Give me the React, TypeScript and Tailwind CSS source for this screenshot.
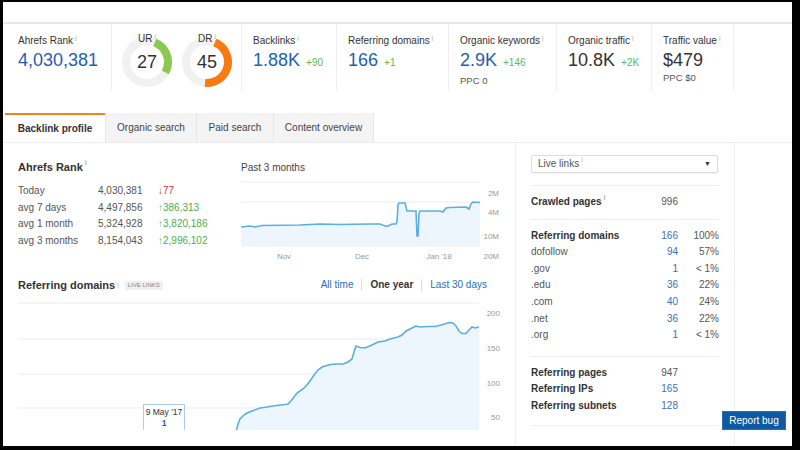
import type { ReactNode } from "react";

const BLUE = "text-[#1f5fb5]";

function Info() {
  return <span className="ml-[2px] align-top text-[7px] leading-none text-[#b0b0b0]">i</span>;
}

function Metric({
  label,
  value,
  delta,
  sub,
  dark,
  width,
}: {
  label: string;
  value: string;
  delta?: string;
  sub?: string;
  dark?: boolean;
  width: string;
}) {
  return (
    <div className={`${width} border-r border-[#efefef] pl-[11px] pt-[11px]`}>
      <div className="text-[10px] leading-[12px] text-[#333]">
        {label}
        <Info />
      </div>
      <div className="mt-[3px] flex items-baseline gap-[6px] leading-[20px]">
        <span className={`text-[18px] ${dark ? "text-[#333]" : BLUE}`}>{value}</span>
        {delta && <span className="text-[10px] text-[#5cb85c]">{delta}</span>}
      </div>
      {sub && <div className="mt-[2px] text-[9.5px] leading-[11px] text-[#555]">{sub}</div>}
    </div>
  );
}

function Donut({ label, value, pct, color }: { label: string; value: string; pct: number; color: string }) {
  const c = 2 * Math.PI * 21;
  return (
    <div className="relative h-[52px] w-[52px]">
      <svg width="52" height="52" viewBox="0 0 52 52">
        <circle cx="26" cy="26" r="21" fill="none" stroke="#f1f1f1" strokeWidth="8" />
        <circle
          cx="26"
          cy="26"
          r="21"
          fill="none"
          stroke={color}
          strokeWidth="8"
          strokeDasharray={`${(c * pct) / 100} ${c}`}
          transform="rotate(-68 26 26)"
        />
      </svg>
      <span className="absolute left-[17px] top-[-3px] text-[10px] leading-[12px] text-[#333]">
        {label}
        <Info />
      </span>
      <span className="absolute inset-0 flex items-center justify-center text-[18px] text-[#333]">
        {value}
      </span>
    </div>
  );
}

function Tab({ children, active, width }: { children: ReactNode; active?: boolean; width: string }) {
  return (
    <div
      className={`${width} flex h-[29px] items-center justify-center text-[10px] ${
        active
          ? "border-t-2 border-[#f5821f] bg-white font-bold text-[#333]"
          : "border-l border-[#e6e6e6] bg-[#f4f4f4] text-[#444]"
      }`}
    >
      {children}
    </div>
  );
}

const rankRows = [
  ["Today", "4,030,381", "↓77", false],
  ["avg 7 days", "4,497,856", "↑386,313", true],
  ["avg 1 month", "5,324,928", "↑3,820,186", true],
  ["avg 3 months", "8,154,043", "↑2,996,102", true],
] as const;

const domainRows = [
  ["dofollow", "94", "57%"],
  [".gov", "1", "< 1%"],
  [".edu", "36", "22%"],
  [".com", "40", "24%"],
  [".net", "36", "22%"],
  [".org", "1", "< 1%"],
];

const rankLine =
  "M241,227 L250,226 L255,227 L262,225.5 L300,225 L320,224 L340,224.5 L370,224 L380,224 L385,226 L388,226 L392,224 L396,224 L397,222 L398,205 L399,203 L405,203 L407,211 L414,211 L416,211 L417,236 L418,236 L419,214 L420,211 L440,211 L443,212 L446,208 L450,207.5 L466,207 L469,209 L471,204 L473,202 L480,202.5";

const domainLine =
  "M236,432 L238,424 L240,419 L244,415 L247,413 L252,411 L260,408 L267,407 L273,406 L280,405 L285,404.5 L288,404 L290,402 L294,397 L297,393 L303,389 L306,386 L310,381 L314,375 L318,370 L322,367 L330,364.5 L337,364 L343,364 L348,362 L352,359 L354,352 L356,346 L360,347.5 L365,348 L372,345 L378,342 L385,341 L390,339 L398,337 L402,335 L406,331 L412,328 L416,326 L420,327 L428,326.5 L435,326.5 L443,324.5 L449,322.5 L453,323 L456,326 L459,331 L462,333.5 L466,333.5 L469,330 L472,327 L475,328 L479,327";

function RankChart() {
  return (
    <svg width="262" height="86" viewBox="241 178 262 86" className="block">
      {[182, 202, 227, 246].map((y) => (
        <line key={y} x1="241" x2="480" y1={y} y2={y} stroke="#ececec" strokeWidth="1" />
      ))}
      <path d={`${rankLine} L480,246 L241,246 Z`} fill="#eef6fd" />
      <path d={rankLine} fill="none" stroke="#5aaee8" strokeWidth="1.6" />
      <g fontSize="8" fill="#999" textAnchor="end">
        <text x="499" y="196">2M</text>
        <text x="499" y="215">4M</text>
        <text x="499" y="239">10M</text>
        <text x="499" y="259">20M</text>
      </g>
      <g fontSize="8" fill="#999" textAnchor="middle">
        <text x="284" y="259">Nov</text>
        <text x="362" y="259">Dec</text>
        <text x="439" y="259">Jan '18</text>
      </g>
    </svg>
  );
}

function DomainsChart() {
  return (
    <svg width="485" height="130" viewBox="18 300 485 130" className="block">
      {[303, 339, 374, 408].map((y) => (
        <line key={y} x1="18" x2="479" y1={y} y2={y} stroke="#ececec" strokeWidth="1" />
      ))}
      <path d={`${domainLine} L479,432 L236,432 Z`} fill="#eef6fd" />
      <path d={domainLine} fill="none" stroke="#5aaee8" strokeWidth="1.6" />
      <g fontSize="8" fill="#999" textAnchor="end">
        <text x="500" y="316">200</text>
        <text x="500" y="351">150</text>
        <text x="500" y="386">100</text>
        <text x="500" y="420">50</text>
      </g>
      <rect x="143.5" y="404.5" width="41" height="30" fill="#fff" stroke="#a9cdef" />
      <text x="164" y="415" fontSize="8.5" fill="#333" textAnchor="middle">
        9 May '17
      </text>
      <text x="164" y="426" fontSize="8.5" fontWeight="bold" fill="#2a5d9f" textAnchor="middle">
        1
      </text>
    </svg>
  );
}

export default function App() {
  return (
    <div className="h-[450px] w-[800px] overflow-hidden bg-black pb-[4px] pl-[3px] pr-[8px] pt-[2px] font-['Liberation_Sans',Arial,sans-serif]">
      <div className="relative h-[444px] w-[789px] overflow-hidden bg-white">
        <div className="h-[22px] border-b-2 border-[#e8e8e8]" />

        {/* metrics strip */}
        <div className="flex h-[67px]">
          <div className="w-[109px] border-r border-[#efefef] pl-[15px] pt-[11px]">
            <div className="text-[10px] leading-[12px] text-[#333]">
              Ahrefs Rank
              <Info />
            </div>
            <div className={`mt-[3px] text-[18px] leading-[20px] ${BLUE}`}>4,030,381</div>
          </div>
          <div className="flex w-[130px] gap-[8px] border-r border-[#efefef] pl-[9px] pt-[12px]">
            <Donut label="UR" value="27" pct={27} color="#8cc751" />
            <Donut label="DR" value="45" pct={45} color="#fa7a12" />
          </div>
          <Metric width="w-[95px]" label="Backlinks" value="1.88K" delta="+90" />
          <Metric width="w-[112px]" label="Referring domains" value="166" delta="+1" />
          <Metric width="w-[108px]" label="Organic keywords" value="2.9K" delta="+146" sub="PPC 0" />
          <Metric width="w-[95px]" label="Organic traffic" value="10.8K" delta="+2K" dark />
          <Metric width="w-[82px]" label="Traffic value" value="$479" sub="PPC $0" dark />
        </div>

        {/* tabs */}
        <div className="mt-[22px] flex h-[30px] border-b border-[#ececec] pl-[2px]">
          <Tab width="w-[100px]" active>
            Backlink profile
          </Tab>
          <Tab width="w-[91px]">Organic search</Tab>
          <Tab width="w-[77px]">Paid search</Tab>
          <Tab width="w-[100px]">
            <span>Content overview</span>
          </Tab>
          <div className="h-[29px] border-l border-[#e6e6e6]" />
        </div>

        <div className="flex">
          {/* main column */}
          <div className="w-[512px] pl-[15px]">
            <div className="flex pt-[16px]">
              <div className="w-[223px]">
                <div className="text-[11px] font-bold leading-[16px] text-[#333]">
                  Ahrefs Rank
                  <Info />
                </div>
                <div className="mt-[8px] text-[10px] leading-[16.7px]">
                  {rankRows.map(([label, value, change, up]) => (
                    <div key={label} className="flex">
                      <span className="w-[80px] text-[#555]">{label}</span>
                      <span className="w-[60px] text-[#555]">{value}</span>
                      <span className={up ? "text-[#4cae4c]" : "text-[#d9363e]"}>{change}</span>
                    </div>
                  ))}
                </div>
              </div>
              <div>
                <div className="mt-[2px] text-[10px] leading-[14px] text-[#444]">Past 3 months</div>
                <div className="mt-[3px]">
                  <RankChart />
                </div>
              </div>
            </div>

            <div className="mt-[13px] flex w-[469px] items-center leading-[16px]">
              <span className="text-[11px] font-bold text-[#333]">Referring domains</span>
              <Info />
              <span className="ml-[6px] bg-[#efefef] px-[3px] text-[6px] leading-[9px] text-[#888]">LIVE LINKS</span>
              <div className="ml-auto flex items-center text-[10px]">
                <span className="text-[#2a6ebb]">All time</span>
                <span className="mx-[8px] h-[12px] border-l border-[#ddd]" />
                <span className="font-bold text-[#333]">One year</span>
                <span className="mx-[8px] h-[12px] border-l border-[#ddd]" />
                <span className="text-[#2a6ebb]">Last 30 days</span>
              </div>
            </div>
            <div className="mt-[7px]">
              <DomainsChart />
            </div>
          </div>

          {/* sidebar */}
          <div className="h-[310px] w-[220px] border-x border-[#eeeeee] px-[15px] pt-[12px] text-[10px] leading-[16.6px]">
            <div className="flex h-[18px] w-[187px] items-center justify-between rounded-[2px] border border-[#dcdcdc] px-[6px] shadow-[0_1px_1px_rgba(0,0,0,0.05)]">
              <span className="text-[#555]">
                Live links
                <Info />
              </span>
              <span className="text-[7px] text-[#333]">▼</span>
            </div>

            <div className="mt-[12px] border-t border-[#ececec] pb-[8px] pt-[8px]">
              <div className="flex">
                <span className="flex-1 font-bold text-[#333]">
                  Crawled pages
                  <Info />
                </span>
                <span className="w-[30px] text-right text-[#555]">996</span>
                <span className="w-[41px]" />
              </div>
            </div>

            <div className="border-t border-[#ececec] pb-[12px] pt-[8px]">
              <div className="flex">
                <span className="flex-1 font-bold text-[#333]">Referring domains</span>
                <span className="w-[30px] text-right text-[#3d6fb8]">166</span>
                <span className="w-[41px] text-right text-[#555]">100%</span>
              </div>
              {domainRows.map(([label, count, pct]) => (
                <div key={label} className="flex">
                  <span className="flex-1 text-[#555]">{label}</span>
                  <span className="w-[30px] text-right text-[#3d6fb8]">{count}</span>
                  <span className="w-[41px] text-right text-[#555]">{pct}</span>
                </div>
              ))}
            </div>

            <div className="border-t border-[#ececec] pb-[10px] pt-[8px]">
              {[
                ["Referring pages", "947", false],
                ["Referring IPs", "165", true],
                ["Referring subnets", "128", true],
              ].map(([label, value, blue]) => (
                <div key={label as string} className="flex">
                  <span className="flex-1 font-bold text-[#333]">{label}</span>
                  <span className={`w-[30px] text-right ${blue ? "text-[#3d6fb8]" : "text-[#555]"}`}>{value}</span>
                  <span className="w-[41px]" />
                </div>
              ))}
            </div>
            <div className="border-t border-[#f0f0f0]" />
          </div>
        </div>

        <button className="absolute left-[719px] top-[409px] h-[19px] w-[64px] border border-[#2f6fae] bg-[#0d5aa3] text-[10px] text-white">
          Report bug
        </button>
      </div>
    </div>
  );
}
